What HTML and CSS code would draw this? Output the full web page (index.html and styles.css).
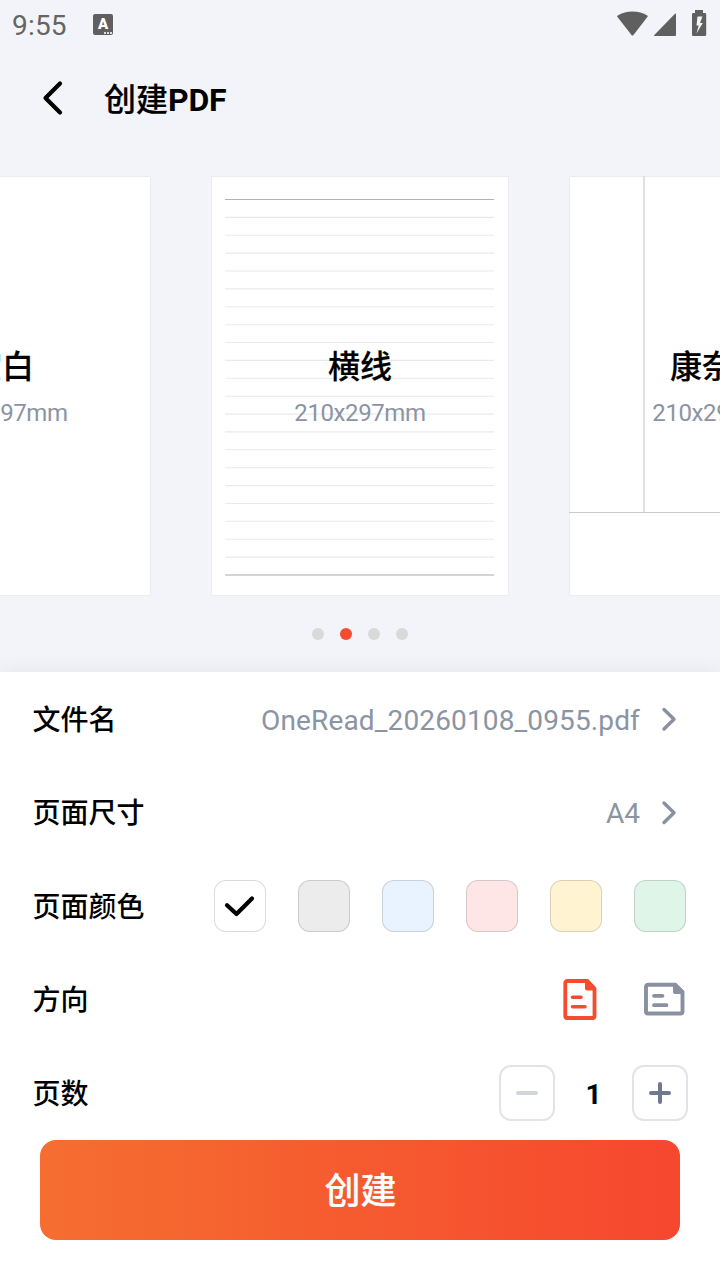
FILE: index.html
```html
<!DOCTYPE html>
<html lang="zh-CN">
<head>
<meta charset="utf-8">
<title>创建PDF</title>
<link rel="stylesheet" href="styles.css">
</head>
<body>
<div class="screen">
  <div class="status-bar">
    <span class="clock">9:55</span>
    <span class="input-badge"><span class="input-letter">A</span><span class="input-dots"><i></i><i></i><i></i></span></span>
    <svg class="status-icons" width="120" height="50" viewBox="0 0 120 50" fill="#5f5f5f">
      <path d="M17.300 16.700Q16.900 15.900 17.700 15.400C22 12.900 27 11.600 32.500 11.600S43 12.900 47.300 15.400Q48.100 15.900 47.500 16.700L33.300 35.200Q32.500 36 31.700 35.200Z"/>
      <path d="M75 13.700Q76 13.300 76 14.300V35Q76 36 75 36H54.500Q53.500 36 54.300 35Z"/>
      <path fill-rule="evenodd" d="M95 10h8v3h2q1.200 0 1.200 1.200v20.600q0 1.200-1.200 1.200H93.200q-1.200 0-1.200-1.200V14.200q0-1.200 1.200-1.200H95ZM97.500 16.500l-1 9h2.200l-2.200 8 6.300-10.500h-2.800l2.500-6.500Z"/>
    </svg>
  </div>

  <header class="nav">
    <svg class="back" width="24" height="36" viewBox="0 0 24 36"><path d="M20 3.500 5.500 18 20 32.500" fill="none" stroke="#000" stroke-width="4.200" stroke-linecap="round" stroke-linejoin="round"/></svg>
    <h1 class="nav-title">创建<span class="nav-latin">PDF</span></h1>
  </header>

  <div class="carousel">
    <div class="card">
      <div class="card-text"><div class="card-name">空白</div><div class="card-size">210x297mm</div></div>
    </div>
    <div class="card">
      <svg class="card-lines" width="298" height="420" viewBox="0 0 298 420" fill="none">
        <path stroke="#e9eaea" stroke-width="1.100" d="M14 41.400h269M14 59.300h269M14 77.100h269M14 95h269M14 112.900h269M14 130.800h269M14 148.700h269M14 166.500h269M14 184.400h269M14 202.300h269M14 220.200h269M14 238.100h269M14 255.900h269M14 273.800h269M14 291.700h269M14 309.600h269M14 327.500h269M14 345.300h269M14 363.200h269M14 381.100h269"/>
        <path stroke="#b0b2b3" d="M14 23.500h269"/>
        <path stroke="#d4d6d6" stroke-width="2" d="M14 399h269"/>
      </svg>
      <div class="card-text"><div class="card-name">横线</div><div class="card-size">210x297mm</div></div>
    </div>
    <div class="card">
      <svg class="card-lines" width="298" height="420" viewBox="0 0 298 420" fill="none">
        <path stroke="#e0e0e1" stroke-width="2" d="M75 0v336"/>
        <path stroke="#c9cacb" d="M0 336.500h298"/>
      </svg>
      <div class="card-text"><div class="card-name">康奈尔</div><div class="card-size">210x297mm</div></div>
    </div>
  </div>

  <div class="dots"><i class="dot"></i><i class="dot dot-active"></i><i class="dot"></i><i class="dot"></i></div>

  <main class="sheet">
    <div class="row">
      <span class="label">文件名</span>
      <span class="value filename">OneRead_20260108_0955.pdf</span>
      <svg class="chevron" width="16" height="26" viewBox="0 0 16 26"><path d="M3 3.500 13 13.200 3 23" /></svg>
    </div>
    <div class="row">
      <span class="label">页面尺寸</span>
      <span class="value">A4</span>
      <svg class="chevron" width="16" height="26" viewBox="0 0 16 26"><path d="M3 4 13 13.700 3 23.500" /></svg>
    </div>
    <div class="row">
      <span class="label">页面颜色</span>
      <div class="swatches">
        <span class="swatch white"><svg width="32" height="24" viewBox="0 0 32 24"><path d="M3 11.200 12.500 20 28 4.500" fill="none" stroke="#000" stroke-width="4.200" stroke-linecap="round" stroke-linejoin="round"/></svg></span>
        <span class="swatch gray"></span>
        <span class="swatch blue"></span>
        <span class="swatch pink"></span>
        <span class="swatch yellow"></span>
        <span class="swatch green"></span>
      </div>
    </div>
    <div class="row">
      <span class="label">方向</span>
      <div class="orientations">
        <svg class="portrait" width="34" height="41" viewBox="0 0 34 41">
          <path d="M4.300 2H24.300L31.500 9.500V37Q31.500 39 29.500 39H4.300Q2.300 39 2.300 37V4Q2.300 2 4.300 2Z" fill="none" stroke="currentColor" stroke-width="3.800"/>
          <path d="M22 1H25L33 9V11.500H24Q22 11.500 22 9.500Z" fill="currentColor"/>
          <path d="M9.500 18.300H18M9.500 27.700H22" stroke="currentColor" stroke-width="3.600" stroke-linecap="round"/>
        </svg>
        <svg class="landscape" width="41" height="34" viewBox="0 0 41 34">
          <path d="M4 2.800H31L38.500 10V29.500Q38.500 31.500 36.500 31.500H4Q2 31.500 2 29.500V4.800Q2 2.800 4 2.800Z" fill="none" stroke="currentColor" stroke-width="3.900"/>
          <path d="M29 1H32L40 9V12H31Q29 12 29 10Z" fill="currentColor"/>
          <path d="M10 13.800H18.500M10 23.200H22.500" stroke="currentColor" stroke-width="3.800" stroke-linecap="round"/>
        </svg>
      </div>
    </div>
    <div class="row">
      <span class="label">页数</span>
      <div class="stepper">
        <span class="step"><svg width="24" height="24" viewBox="0 0 24 24"><path d="M3 12H21" stroke="#d2d6da" stroke-width="4" stroke-linecap="round"/></svg></span>
        <span class="count">1</span>
        <span class="step"><svg width="24" height="24" viewBox="0 0 24 24"><path d="M3 12H21M12 3V21" stroke="#70798f" stroke-width="4" stroke-linecap="round"/></svg></span>
      </div>
    </div>
    <div class="create">创建</div>
  </main>
</div>
</body>
</html>
```

FILE: styles.css
```css
* { box-sizing: border-box; }

body {
  margin: 0;
  font-family: Roboto, "Noto Sans CJK SC", sans-serif;
  color: #000;
}

.screen {
  width: 720px;
  height: 1280px;
  overflow: hidden;
  display: flex;
  flex-direction: column;
  background: #f3f4f9;
}

svg { display: block; flex: none; }

.status-bar {
  height: 50px;
  display: flex;
  align-items: center;
  padding-left: 12px;
}

.clock {
  width: 81px;
  padding-top: 2px;
  font-size: 28px;
  line-height: 50px;
  letter-spacing: 0.2px;
  color: #646464;
}

.input-badge {
  width: 20px;
  height: 21px;
  margin-top: -2px;
  border-radius: 2px;
  background: #5f5f5f;
  color: #fff;
  display: flex;
  flex-direction: column;
  align-items: center;
}

.input-letter {
  font-size: 15px;
  font-weight: 900;
  line-height: 17px;
  height: 17px;
  padding-top: 2px;
}

.input-dots {
  display: flex;
  gap: 1px;
  align-self: flex-end;
  padding: 1px 1px 0 0;
}

.input-dots i { width: 2px; height: 2px; background: #dedede; }

.status-icons { margin-left: auto; }

.nav {
  height: 98px;
  display: flex;
  align-items: center;
  padding-left: 40px;
}

.back { margin-top: -2px; }

.nav-title {
  margin: 2px 0 0 40px;
  font-size: 32px;
  line-height: 40px;
  font-weight: 500;
  -webkit-text-stroke: 0.2px currentColor;
}

.nav-latin {
  font-weight: 700;
  letter-spacing: -0.2px;
  -webkit-text-stroke: 0;
}

.carousel {
  height: 448px;
  padding-top: 28px;
  display: flex;
  justify-content: center;
  gap: 60px;
}

.card {
  flex: none;
  width: 298px;
  height: 420px;
  border: 1px solid #ebecee;
  background: #fff;
  display: grid;
  justify-items: center;
}

.card-lines {
  grid-area: 1 / 1;
  margin: -1px;
}

.card-text {
  grid-area: 1 / 1;
  padding-top: 166px;
  text-align: center;
}

.card-name {
  font-size: 32px;
  line-height: 48px;
  font-weight: 500;
  -webkit-text-stroke: 0.2px currentColor;
}

.card-size {
  margin-top: 7px;
  font-size: 24px;
  line-height: 30px;
  letter-spacing: -0.4px;
  color: #8b94a3;
}

.dots {
  height: 76px;
  display: flex;
  justify-content: center;
  align-items: center;
  gap: 16px;
}

.dot {
  width: 12px;
  height: 12px;
  border-radius: 50%;
  background: #d9d9d9;
}

.dot-active { background: #f64a31; }

.sheet {
  flex: 1;
  background: #fff;
  box-shadow: 0 0 20px rgba(0, 0, 0, 0.07);
}

.row {
  height: 93.5px;
  padding: 0 32px;
  display: flex;
  align-items: center;
}

.label {
  margin-right: auto;
  padding: 4px 0 0 0.5px;
  font-size: 28px;
  line-height: 42px;
  font-weight: 500;
}

.value {
  padding-top: 4px;
  font-size: 28px;
  line-height: 40px;
  color: #8b94a3;
}

.filename { letter-spacing: 0.14px; }

.chevron {
  margin: 0 11px 0 21px;
  fill: none;
  stroke: #8990a2;
  stroke-width: 3.400;
  stroke-linecap: round;
  stroke-linejoin: round;
}

.swatches {
  display: flex;
  gap: 32px;
  margin-right: 2px;
}

.swatch {
  width: 52px;
  height: 52px;
  border-radius: 12px;
  border: 1px solid rgba(0, 0, 0, 0.14);
  display: grid;
  place-items: center;
}

.white { background: #fff; }
.gray { background: #ececec; }
.blue { background: #e8f3ff; }
.pink { background: #fee6e6; }
.yellow { background: #fff3d2; }
.green { background: #def5e8; }

.orientations {
  display: flex;
  align-items: center;
  gap: 47px;
  margin-right: 3px;
}

.portrait { color: #f64a31; }
.landscape { color: #8990a0; }

.stepper { display: flex; align-items: center; }

.step {
  width: 56px;
  height: 56px;
  border: 2px solid #e3e3e9;
  border-radius: 12px;
  display: grid;
  place-items: center;
}

.count {
  width: 77px;
  padding-top: 4px;
  text-align: center;
  font-size: 28px;
  font-weight: 700;
}

.create {
  margin: 0.5px 40px 0;
  height: 100px;
  padding: 2px 0 0 1px;
  border-radius: 16px;
  background: linear-gradient(90deg, #f56e30, #f6472f);
  color: #fff;
  text-align: center;
  font-size: 36px;
  font-weight: 500;
  line-height: 100px;
  -webkit-text-stroke: 0.2px currentColor;
}
```
